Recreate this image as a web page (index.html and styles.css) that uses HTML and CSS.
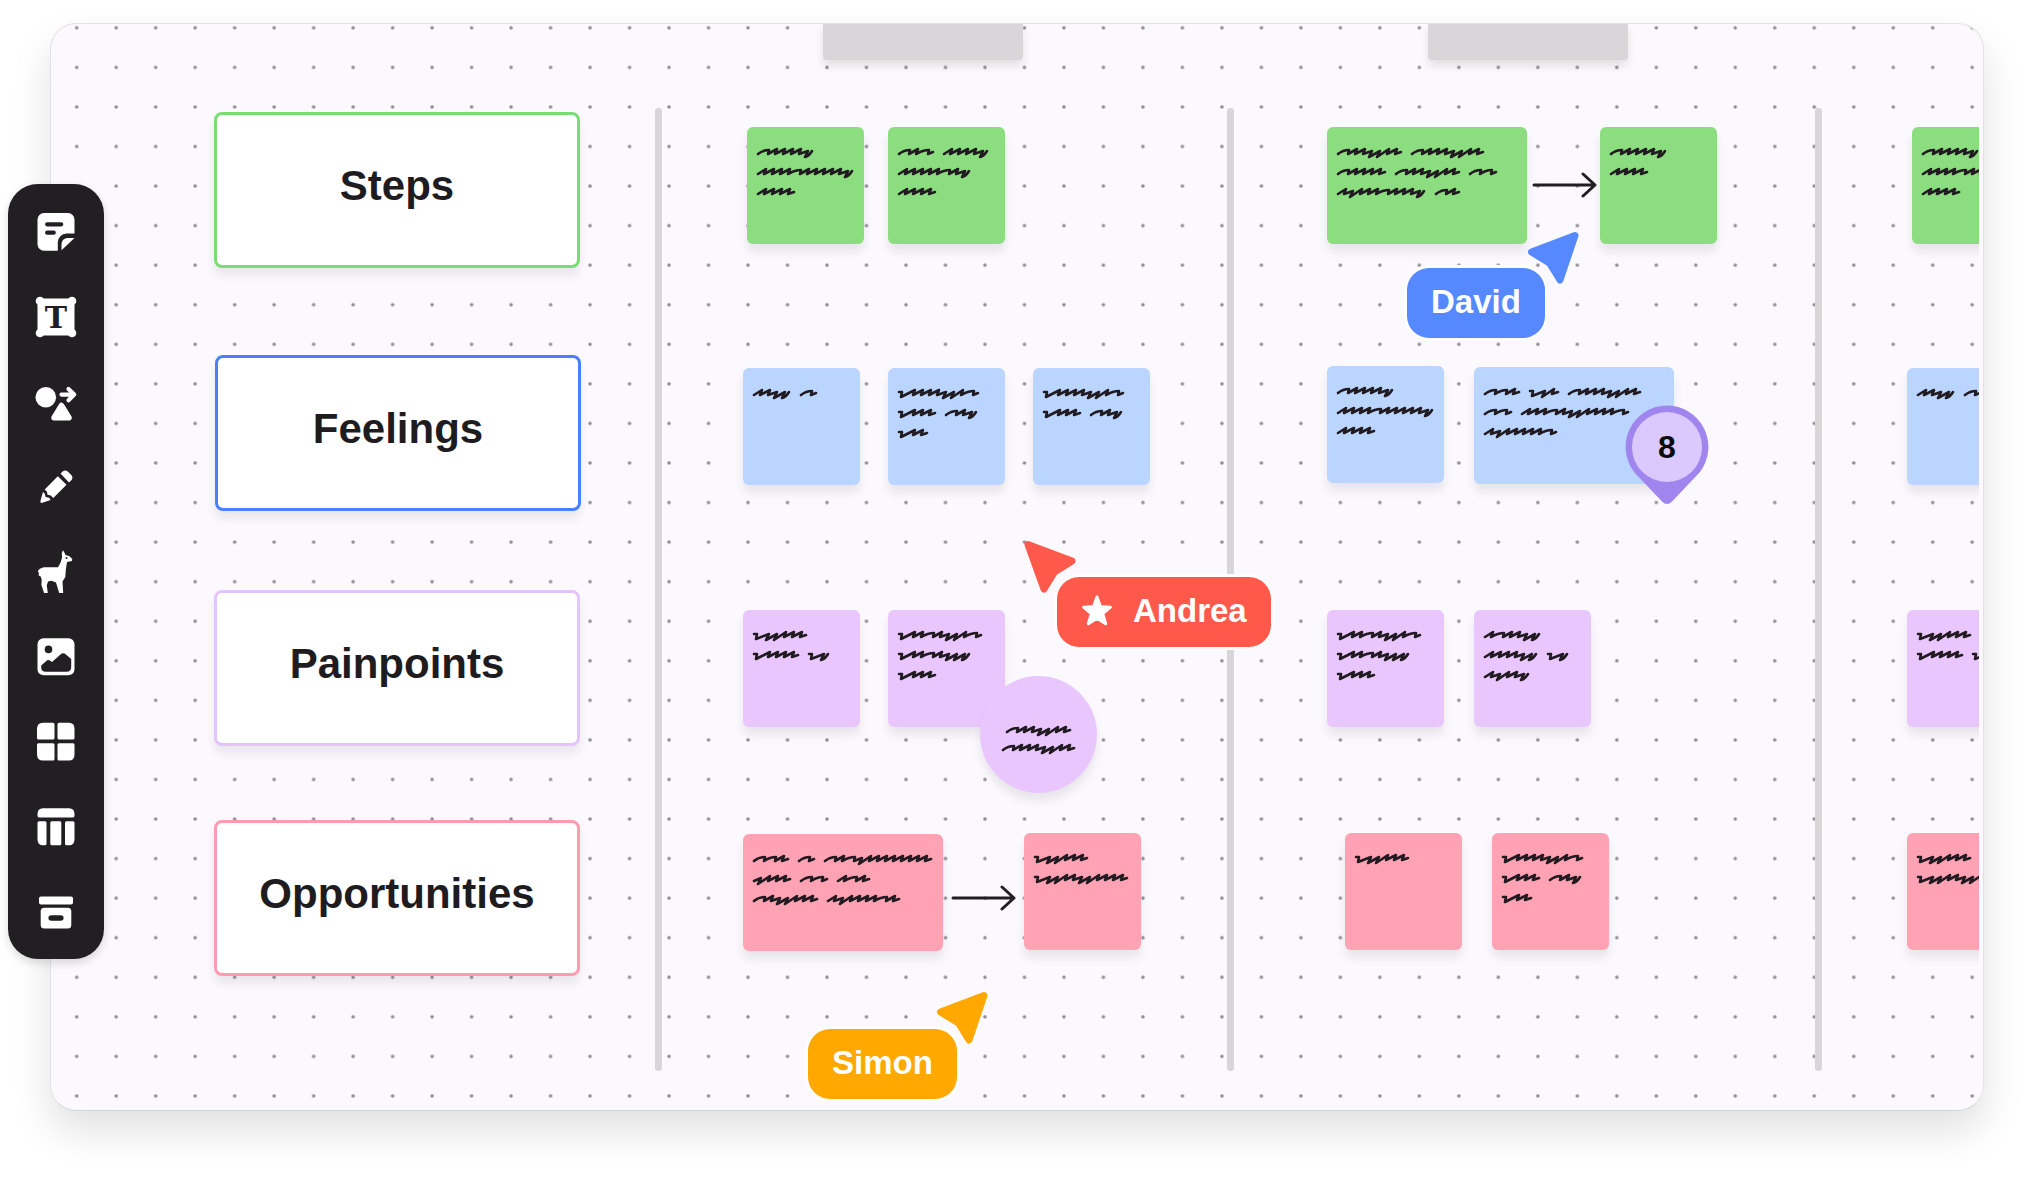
FILE: index.html
```html
<!DOCTYPE html>
<html lang="en">
<head>
<meta charset="utf-8">
<title>Journey map board</title>
<link rel="stylesheet" href="styles.css">
</head>
<body>
<nav class="toolbar" aria-label="Board tools">
  <button type="button" aria-label="Sticky note"><svg viewBox="0 0 48 48"><path d="M12 5H36a6.500 6.500 0 0 1 6.500 6.500V25.600H34.500a8.700 8.700 0 0 0-8.700 8.700V42.700H12a6.500 6.500 0 0 1-6.500-6.500V11.500A6.500 6.500 0 0 1 12 5Z"/><path d="M29.500 42.300V36a6 6 0 0 1 6-6H42.500Z"/><path class="cut" d="M15.200 16.300h14M15.200 24.700h6.500" stroke-width="4.300"/></svg></button>
  <button type="button" aria-label="Text"><svg viewBox="0 0 48 48"><rect x="5.500" y="5.500" width="37" height="37"/><circle cx="8" cy="8" r="4.300"/><circle cx="40" cy="8" r="4.300"/><circle cx="8" cy="40" r="4.300"/><circle cx="40" cy="40" r="4.300"/><text x="24" y="35" text-anchor="middle">T</text></svg></button>
  <button type="button" aria-label="Shapes"><svg viewBox="0 0 48 48"><circle cx="13.800" cy="19.300" r="10.300"/><path d="M29.500 27.500 37 39.800H22Z" stroke="#fff" stroke-width="5.500" stroke-linejoin="round"/><path class="line" d="M29.500 16.600H42M36.500 11l5.700 5.600-5.700 5.600" stroke-width="4.200"/></svg></button>
  <button type="button" aria-label="Pen"><svg viewBox="0 0 48 48"><path d="M28.500 10.600 31 8.200q2.500-1.800 5 .6l2.800 2.800q2.800 2.700.8 5.300l-2.600 2.500ZM25.800 13.300l8.700 8.500L21.300 35l-2.500-2.600-3.300-.6-.5-3-2.300-2.200ZM11 29l1.600 1.400 1 3.500 3.500.8 1.500 2.400-9 2.800q-1.800 0-1.200-1.800Z"/></svg></button>
  <button type="button" aria-label="Alpaca"><svg viewBox="0 0 48 48"><path d="M31 2.300l1.500 2.500 1 2.300 4 1.200 2.800 2.600-.5 2-4.800 1-1.200 8-.5 7-2.800 4.500.7 11.600h-4l-3.200-10.600-4.500-1.600-3.500.7-1.200 3.800 1 7.700h-3.700l-2.700-8 .3-5.500-1.200-3.300-1.800-.6.2-2.500-1.100-2 2-2.300 4-1.600H26l2.500-4.500 1.500-5-.2-4.700Z"/><circle cx="34.500" cy="10" r="1" class="hole"/></svg></button>
  <button type="button" aria-label="Image"><svg viewBox="0 0 48 48"><rect x="5.500" y="5.300" width="37" height="37" rx="6"/><circle class="hole" cx="16.500" cy="16.400" r="3.800"/><path class="hole" d="M9.200 32.500l6-5.200q1.500-.8 3 .5l1.800 1.300 8.500-7.700q2.700-2.300 5.400 0l5.300 4.600V34q0 4.700-4.700 4.700H14q-4.800 0-4.800-4Z"/></svg></button>
  <button type="button" aria-label="Grid"><svg viewBox="0 0 48 48"><path d="M11 4.700H21q1.500 0 1.500 1.500V20q0 1.500-1.500 1.500H6.500Q5 21.500 5 20V11q0-6.300 6-6.300ZM27 4.700H37q5.500 0 5.500 6.300v9q0 1.500-1.500 1.500H27q-1.500 0-1.500-1.500V6.200q0-1.500 1.500-1.500ZM6.500 25.300H21q1.500 0 1.500 1.500V41q0 1.500-1.500 1.500H11q-6 0-6-6.300V26.800q0-1.500 1.500-1.500ZM27 25.300H41q1.500 0 1.500 1.500v9.400q0 6.300-5.500 6.300H27q-1.500 0-1.500-1.500V26.800q0-1.500 1.500-1.500Z"/></svg></button>
  <button type="button" aria-label="Table"><svg viewBox="0 0 48 48"><path d="M11 5.200H37q5.500 0 5.500 6v1.500q0 1.700-1.700 1.700H7.200q-1.700 0-1.700-1.700v-1.500q0-6 5.500-6ZM7 18.300h6q1.500 0 1.500 1.500V40.700q0 1.500-1.500 1.500H11q-5.500 0-5.500-6V19.800q0-1.500 1.500-1.500ZM34.500 18.300h6.500q1.500 0 1.500 1.500V36.200q0 6-5.500 6H34.500q-1.500 0-1.500-1.500V19.800q0-1.500 1.500-1.500Z"/><rect x="18.300" y="18.300" width="11" height="24" rx="1.500"/></svg></button>
  <button type="button" aria-label="Archive"><svg viewBox="0 0 48 48"><rect x="7" y="8.500" width="34" height="8" rx="2"/><rect x="8.700" y="19.700" width="30.600" height="20.700" rx="3.500"/><path class="cut" d="M19.200 30h9.600" stroke-width="5.500"/></svg></button>
</nav>

<main class="board">
  <svg class="dots" aria-hidden="true"><defs><pattern id="dot" x="5.950" y="-15.950" width="39.490" height="39.560" patternUnits="userSpaceOnUse"><circle cx="19.750" cy="19.780" r="1.800" fill="#8d8b90"/></pattern></defs><rect width="100%" height="100%" fill="url(#dot)"/></svg>

  <div class="canvas">
    <div class="item tab" style="--x:772;--y:0"></div>
    <div class="item tab" style="--x:1377;--y:0"></div>
    <div class="item divider" style="--x:604;--y:84"></div>
    <div class="item divider" style="--x:1176;--y:84"></div>
    <div class="item divider" style="--x:1764;--y:84"></div>

    <h2 class="item label green" style="--x:163;--y:88">Steps</h2>
    <h2 class="item label blue" style="--x:164;--y:331">Feelings</h2>
    <h2 class="item label purple" style="--x:163;--y:566">Painpoints</h2>
    <h2 class="item label pink" style="--x:163;--y:796">Opportunities</h2>

    <div class="item note green" style="--x:696;--y:103" data-hand="wnnnnu|nnnnwnnnnnu|nnnn"></div>
    <div class="item note green" style="--x:837;--y:103" data-hand="wnw nnnnu|nnnnnwnu|nnnn"></div>
    <div class="item note blue" style="--x:692;--y:344" data-hand="nnuu w"></div>
    <div class="item note blue" style="--x:837;--y:344" data-hand="vnnnnuunw|vnnn wnu|vnn"></div>
    <div class="item note blue" style="--x:982;--y:344" data-hand="vnnnnuunw|vnnn wnu"></div>
    <div class="item note purple" style="--x:692;--y:586" data-hand="vuunnn|vnnnn vu"></div>
    <div class="item note purple" style="--x:837;--y:586" data-hand="vnnwnuunw|vnnwnuuu|vnnn"></div>
    <div class="item note purple round" style="--x:929;--y:652" data-hand="wnnuunn|wnnnuunn"></div>
    <div class="item note pink wide" style="--x:692;--y:810" data-hand="wwn w wnwunnnnnnnn|unnn ww nwn|wnuunnn nunnnnwn"></div>
    <div class="item note pink" style="--x:973;--y:809" data-hand="vuunnn|vuunnuunnnn"></div>

    <div class="item note green wide" style="--x:1276;--y:103" data-hand="wnnuunn wnnnuunn|wnnnn wnnuunn ww|nunnnwnnnu wn"></div>
    <div class="item note green" style="--x:1549;--y:103" data-hand="wnnnnu|nnnn"></div>
    <div class="item note blue" style="--x:1276;--y:342" data-hand="wnnnnu|nnnnwnnnnnu|nnnn"></div>
    <div class="item note blue wide" style="--x:1423;--y:343" data-hand="wwn vun wnnnuunn|ww nnnwnuunnnnw|nunnnnnw"></div>
    <div class="item note purple" style="--x:1276;--y:586" data-hand="vnnwnuunw|vnnwnuuu|vnnn"></div>
    <div class="item note purple" style="--x:1423;--y:586" data-hand="nwnnuu|nnnnuu vu|nunnu"></div>
    <div class="item note pink" style="--x:1294;--y:809" data-hand="vuunnn"></div>
    <div class="item note pink" style="--x:1441;--y:809" data-hand="vnnnnuunw|vnnn wnu|vnn"></div>

    <div class="item note green" style="--x:1861;--y:103" data-hand="wnnnnu|nnnnwnnnnnu|nnnn"></div>
    <div class="item note blue" style="--x:1856;--y:344" data-hand="nnuu w"></div>
    <div class="item note purple" style="--x:1856;--y:586" data-hand="vuunnn|vnnnn vu"></div>
    <div class="item note pink" style="--x:1856;--y:809" data-hand="vuunnn|vuunnuunnnn"></div>

    <svg class="item arrow" style="--x:1480;--y:148" viewBox="0 0 66 26"><path d="M3 13H64M52 2l12 11-12 11"/></svg>
    <svg class="item arrow" style="--x:899;--y:861" viewBox="0 0 66 26"><path d="M3 13H64M52 2l12 11-12 11"/></svg>

    <svg class="item pin" style="--x:1574;--y:381" viewBox="0 0 84 100"><path d="M42 .5A41.500 41.500 0 0 0 9 67L37 96.500q5 5 10 0L75 67A41.500 41.500 0 0 0 42 .5Z" fill="#a085ee"/><circle cx="42" cy="42" r="35" fill="#dbc9fe"/><text x="42" y="53" text-anchor="middle">8</text></svg>

    <svg class="item cursor david" style="--x:1476;--y:207" viewBox="0 0 54 54"><path d="M48 4.500 4.500 21 22.500 32 33 49Z"/></svg>
    <div class="item chip david" style="--x:1356;--y:244">David</div>
    <svg class="item cursor simon" style="--x:885;--y:967" viewBox="0 0 54 54"><path d="M48 4.500 4.500 21 22.500 32 33 49Z"/></svg>
    <div class="item chip simon" style="--x:757;--y:1005">Simon</div>
    <svg class="item cursor andrea" style="--x:972;--y:516" viewBox="0 0 54 54"><path d="M5 4.500 49 21 31.500 32 21 49Z"/></svg>
    <div class="item chip andrea" style="--x:1006;--y:553"><svg class="star" viewBox="0 0 32 32"><path d="M16 2l3.400 9.600 10 .6-7.700 6.500 3 10.100L16 23.300 7.300 28.800l3-10.100L2.600 12.200l10-.6Z"/></svg>Andrea</div>
  </div>
</main>
<script src="ink.js"></script>
</body>
</html>
```
FILE: styles.css
```css
* { box-sizing: border-box; }

body {
  margin: 0;
  padding: 23px 48px 73px 50px;
  position: relative;
  background: #fff;
  color: #1e1c1f;
  font-family: "Liberation Sans", Arial, sans-serif;
}

/* Tool rail, floating over the board's left edge */
.toolbar {
  position: absolute;
  z-index: 2;
  left: 8px;
  top: 184px;
  width: 96px;
  display: flex;
  flex-direction: column;
  padding: 5px 0;
  border-radius: 30px;
  background: #211f22;
  box-shadow: 0 4px 10px rgba(0, 0, 0, .14);
}
.toolbar button {
  display: flex;
  align-items: center;
  justify-content: center;
  height: 85px;
  padding: 0;
  border: 0;
  background: none;
  cursor: pointer;
}
.toolbar svg { width: 48px; height: 48px; fill: #fff; }
.toolbar text {
  fill: #211f22;
  font: bold 30px "DejaVu Serif", serif;
}
.toolbar .cut { fill: none; stroke: #211f22; stroke-linecap: round; }
.toolbar .line { fill: none; stroke: #fff; stroke-linecap: round; stroke-linejoin: round; }
.toolbar .hole { fill: #211f22; }

.board {
  position: relative;
  min-height: calc(100vh - 96px);
  overflow: hidden;
  border: 1px solid #e3e1e4;
  border-bottom-color: #d3d2d5;
  border-radius: 26px;
  background: #fbf9fd;
}
body::before {
  content: "";
  position: absolute;
  inset: 23px 48px 73px 50px;
  border-radius: 26px;
  box-shadow: 0 20px 40px rgba(0, 0, 0, .12);
}
.dots { position: absolute; inset: 0; width: 100%; height: 100%; }
.canvas { position: absolute; inset: 0 4px 0 0; overflow: hidden; }

/* Everything placed freely on the canvas */
.item {
  position: absolute;
  left: calc(var(--x) * 1px);
  top: calc(var(--y) * 1px);
}

.green { --tone: #8bdd7f; --line: #7bdc74; }
.blue { --tone: #bad5ff; --line: #4a80ff; }
.purple { --tone: #e9c7fe; --line: #e3c4ff; }
.pink { --tone: #ffa3b4; --line: #ff9cb0; }

.tab {
  width: 200px;
  height: 36px;
  border-radius: 0 0 4px 4px;
  background: #d8d6d9;
  box-shadow: 0 6px 10px rgba(0, 0, 0, .1);
}
.divider {
  width: 7px;
  bottom: 39px;
  border-radius: 3px;
  background: #d8d6d9;
}
.label {
  display: flex;
  align-items: center;
  justify-content: center;
  width: 366px;
  height: 156px;
  margin: 0;
  padding-bottom: 8px;
  border: 3px solid var(--line);
  border-radius: 8px;
  background: #fff;
  font-size: 42px;
  line-height: 48px;
  box-shadow: 0 8px 10px rgba(0, 0, 0, .07);
}
.note {
  width: 117px;
  height: 117px;
  border-radius: 6px;
  background: var(--tone);
  box-shadow: 0 8px 10px rgba(0, 0, 0, .08);
}
.note.wide { width: 200px; }
.note.round { border-radius: 50%; }
.ink {
  display: block;
  width: 100%;
  height: 100%;
  fill: none;
  stroke: #211a20;
  stroke-width: 2.6px;
  stroke-linecap: round;
  stroke-linejoin: round;
}

.arrow {
  width: 66px;
  height: 26px;
  fill: none;
  stroke: #211f22;
  stroke-width: 3px;
  stroke-linecap: round;
  stroke-linejoin: round;
}
.pin { width: 84px; height: 100px; }
.pin text { fill: #0d0b10; font-size: 32px; font-weight: bold; }

.david { --user: #5689ff; }
.simon { --user: #ffa800; }
.andrea { --user: #ff594b; }
.cursor {
  width: 54px;
  height: 54px;
  fill: var(--user);
  stroke: var(--user);
  stroke-width: 7px;
  stroke-linejoin: round;
}
.chip {
  display: flex;
  align-items: center;
  gap: 20px;
  height: 70px;
  padding: 0 24px 2px;
  border-radius: 22px;
  background: var(--user);
  color: #fff;
  font-size: 33px;
  font-weight: bold;
  line-height: 40px;
  box-shadow: 0 0 0 3px #fdfcfe;
}
.star { width: 32px; height: 32px; fill: #fff; stroke: #fff; stroke-width: 3px; stroke-linejoin: round; }
```
FILE: ink.js
```js
// Draws the handwriting on the notes. Each letter is one stroke pair:
// n = short hump, w = wide hump, u = low hump, v = lead-in that starts high.
const STEP = { n: 8, w: 11, u: 8, v: 8 };
const GAP = 12;
const LINE = 20;

function word(letters, x, y) {
  let d = letters[0] === 'v' ? '' : `M${x} ${y + 2}`;
  for (const [i, c] of [...letters].entries()) {
    const last = i === letters.length - 1;
    if (c === 'v') d += `M${x} ${y - 1}l3 0l-1 5`;
    if (c === 'n') d += `L${x + 8} ${y - 3}L${x + 6} ${y + 2}`;
    if (c === 'w') d += `Q${x + 5} ${y - 2} ${x + 11} ${y - 2}L${x + 10} ${y + 2}`;
    if (c === 'u') d += `L${x + 7} ${y - 1}L${x + 4} ${y + 5}`;
    x += STEP[c];
    if (last) d += c === 'u' ? `Q${x} ${y + 4} ${x + 3} ${y - 1}` : `L${x + 4} ${y}`;
  }
  return [d, x + 3];
}

for (const note of document.querySelectorAll('[data-hand]')) {
  const round = note.classList.contains('round');
  let d = '';
  note.dataset.hand.split('|').forEach((line, row) => {
    let x = 11;
    if (round) x = row ? 23 : 27;
    const y = (round ? 54 : 25) + row * (round ? 18 : LINE);
    for (const letters of line.split(' ')) {
      const [path, end] = word(letters, x, y);
      d += path;
      x = end + GAP;
    }
  });
  note.innerHTML = `<svg class="ink" aria-hidden="true"><path d="${d}"/></svg>`;
}
```
